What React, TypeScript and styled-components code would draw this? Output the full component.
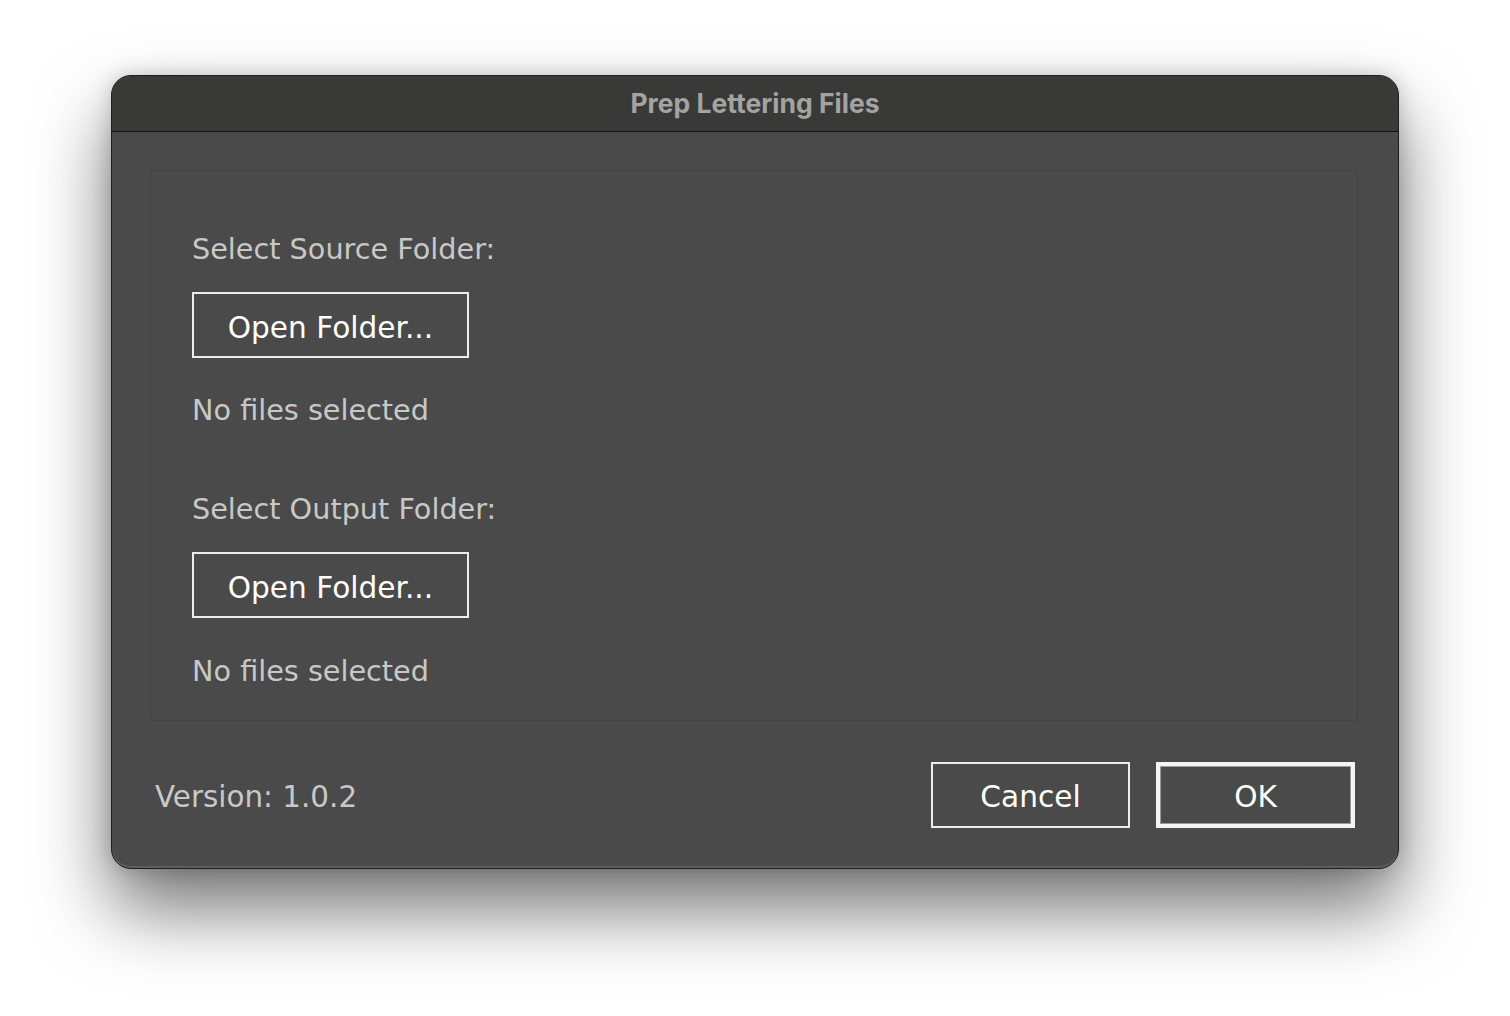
import React from "react";
import styled, { createGlobalStyle } from "styled-components";

const Global = createGlobalStyle`
  html, body { margin: 0; padding: 0; background: #ffffff; }
  body { width: 1510px; height: 1016px; overflow: hidden; }
`;

const Page = styled.div`
  padding: 75px 112px 0 111px;
  box-sizing: border-box;
  width: 1510px;
  height: 1016px;
`;

const Window = styled.div`
  width: 1288px;
  height: 794px;
  box-sizing: border-box;
  border: 1px solid #1e1e1e;
  border-radius: 20px;
  background: #4a4a4a;
  overflow: hidden;
  display: flex;
  flex-direction: column;
  box-shadow: 0 40px 75px rgba(0, 0, 0, 0.55), 0 0 20px rgba(0, 0, 0, 0.18),
    inset 0 -2px 0 #5e5e5e, inset 0 1px 0 #555;
`;

const TitleBar = styled.div`
  height: 56px;
  flex: none;
  background: #393938;
  border-bottom: 1px solid #141414;
  display: flex;
  align-items: center;
  justify-content: center;
  padding-bottom: 2px;
  box-sizing: border-box;
  font-family: Inter, "Liberation Sans", sans-serif;
  font-weight: 700;
  font-size: 26.5px;
  color: #a3a3a3;
`;

const Body = styled.div`
  flex: 1;
  display: flex;
  flex-direction: column;
  padding: 38px 40px 0 38px;
  font-family: "DejaVu Sans", "Liberation Sans", sans-serif;
`;

const Panel = styled.div`
  height: 551px;
  box-sizing: border-box;
  border: 1px solid #424242;
  border-radius: 3px;
  padding: 58px 41px 0 41px;
  display: flex;
  flex-direction: column;
  align-items: flex-start;
`;

const Section = styled.div<{ $gap?: number }>`
  display: flex;
  flex-direction: column;
  align-items: flex-start;
  margin-top: ${(p) => p.$gap ?? 0}px;
`;

const Label = styled.div<{ $top?: number }>`
  font-size: 28.7px;
  line-height: 40px;
  color: #c8c8c8;
  margin-top: ${(p) => p.$top ?? 0}px;
`;

const Button = styled.button<{ $primary?: boolean; $w: number; $top?: number }>`
  width: ${(p) => p.$w}px;
  height: 66px;
  margin-top: ${(p) => p.$top ?? 0}px;
  box-sizing: border-box;
  background: #4a4a4a;
  border: ${(p) => (p.$primary ? "4px solid #f4f4f4" : "2px solid #ededed")};
  box-shadow: ${(p) => (p.$primary ? "inset 0 0 0 1px #9a9a9a" : "none")};
  color: #ffffff;
  font-family: "DejaVu Sans", "Liberation Sans", sans-serif;
  font-size: 29.6px;
  padding: 5px 0 0 0;
  display: flex;
  align-items: center;
  justify-content: center;
`;

const Footer = styled.div`
  flex: 1;
  display: flex;
  align-items: center;
  justify-content: space-between;
  padding: 0 3px 0 5px;
`;

const Version = styled.div`
  font-size: 29.4px;
  color: #c8c8c8;
  padding-top: 4px;
`;

const Actions = styled.div`
  display: flex;
  gap: 26px;
`;

export default function App() {
  return (
    <>
      <Global />
      <Page>
        <Window>
          <TitleBar>Prep Lettering Files</TitleBar>
          <Body>
            <Panel>
              <Section>
                <Label>Select Source Folder:</Label>
                <Button $w={277} $top={23}>Open Folder...</Button>
                <Label $top={32}>No files selected</Label>
              </Section>
              <Section $gap={59}>
                <Label>Select Output Folder:</Label>
                <Button $w={277} $top={23}>Open Folder...</Button>
                <Label $top={33}>No files selected</Label>
              </Section>
            </Panel>
            <Footer>
              <Version>Version: 1.0.2</Version>
              <Actions>
                <Button $w={199}>Cancel</Button>
                <Button $w={199} $primary>OK</Button>
              </Actions>
            </Footer>
          </Body>
        </Window>
      </Page>
    </>
  );
}
